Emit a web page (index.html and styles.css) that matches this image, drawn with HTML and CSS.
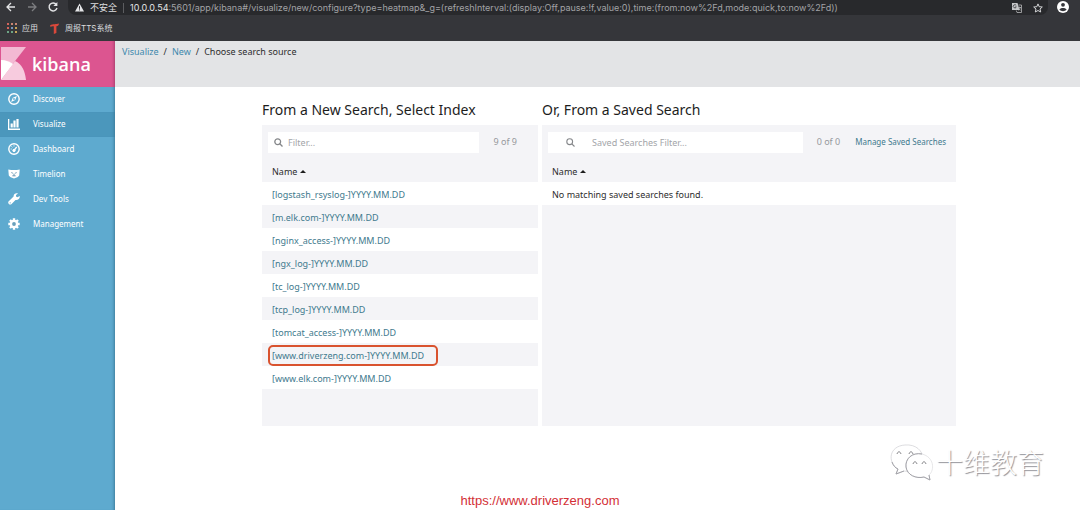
FILE: index.html
```html
<!DOCTYPE html>
<html lang="en">
<head>
<meta charset="utf-8">
<title>Kibana</title>
<link rel="stylesheet" href="styles.css">
</head>
<body>
<header class="browser">
  <div class="toolbar">
    <button class="tool" aria-label="Back"><svg width="12" height="12" viewBox="0 0 12 12" fill="none" stroke="#e4e5e7" stroke-width="1.3"><path d="M10 6H2M6 2L2 6l4 4"/></svg></button>
    <button class="tool" aria-label="Forward"><svg width="12" height="12" viewBox="0 0 12 12" fill="none" stroke="#7c7d80" stroke-width="1.3"><path d="M2 6h8M6 2l4 4-4 4"/></svg></button>
    <button class="tool" aria-label="Reload"><svg width="12" height="12" viewBox="0 0 12 12" fill="none" stroke="#e4e5e7" stroke-width="1.4"><path d="M9.4 3.6A4 4 0 1 0 10 7"/><path d="M10.4 1v4H6.4z" fill="#e4e5e7" stroke="none"/></svg></button>
    <div class="address">
      <svg width="9" height="9" viewBox="0 0 9 9"><path d="M4.5.5L9 8.5H0z" fill="#e4e5e7"/><path d="M4.5 3.2v2.6M4.5 6.4v1" stroke="#28292c"/></svg>
      <span class="unsafe">不安全</span>
      <span class="url"><b>10.0.0.54</b>:5601/app/kibana#/visualize/new/configure?type=heatmap&amp;_g=(refreshInterval:(display:Off,pause:!f,value:0),time:(from:now%2Fd,mode:quick,to:now%2Fd))</span>
      <button class="tool" aria-label="Translate"><svg width="10" height="10" viewBox="0 0 10 10"><path d="M0 0h5.5l2 7H0z" fill="#c5c6c8"/><path d="M4.2 2.4A1.6 1.6 0 1 0 4.3 4H3" fill="none" stroke="#35363a" stroke-width=".8"/><path d="M6.5 2h3v7.5H5l-.7-2M6 4.5h3M7.5 3.7v.8M8.4 4.6L6.7 7.5M6.8 5.4l1.7 2" fill="none" stroke="#b5b6b8" stroke-width=".8"/></svg></button>
      <button class="tool" aria-label="Bookmark"><svg width="10" height="10" viewBox="0 0 10 10" fill="none" stroke="#d4d5d7"><path d="M5 .9l1.2 2.8 3.1.3L7 6l.7 3L5 7.5 2.3 9 3 6 .7 4l3.1-.3z"/></svg></button>
    </div>
    <button class="tool" aria-label="Profile"><svg width="12" height="12" viewBox="0 0 12 12"><circle cx="6" cy="6" r="6" fill="#fff"/><circle cx="6" cy="3.8" r="1.9" fill="#35363a"/><path d="M2.4 8.6C3 6.4 9 6.4 9.6 8.6 8 10.8 4 10.8 2.4 8.6z" fill="#35363a"/></svg></button>
  </div>
  <nav class="bookmarks">
    <a href="#"><svg width="10" height="10" viewBox="0 0 10 10"><path d="M0 0h2v2H0zM0 4h2v2H0z" fill="#d2655c"/><path d="M4 0h2v2H4zM8 0h2v2H8z" fill="#c98672"/><path d="M4 4h2v2H4z" fill="#7595bd"/><path d="M8 4h2v2H8zM8 8h2v2H8z" fill="#c6a457"/><path d="M0 8h2v2H0zM4 8h2v2H4z" fill="#6da585"/></svg>应用</a>
    <a href="#"><svg width="10" height="11" viewBox="0 0 10 11"><path d="M0 2.5C3 .3 6 1.8 9 .5 8.8 2.5 8 3 6.4 3.2V10L3.8 11V3.3C2.3 2.9 1.2 3.4.6 4z" fill="#d9483b"/></svg>周报TTS系统</a>
  </nav>
</header>
<div class="app">
  <aside class="sidebar">
    <a class="logo" href="#">
      <svg width="26" height="34" viewBox="0 0 26 34"><path d="M1 0h25L1 32z" fill="#f3b9d3"/><path d="M15 14c7 3 10 10 11 19H1z" fill="#f7cbde"/><path d="M1 13c5 0 9 2 12 4L1 33z" fill="#fff"/></svg>
      <span>kibana</span>
    </a>
    <nav class="menu">
      <a href="#"><svg width="12" height="12" viewBox="0 0 12 12"><circle cx="6" cy="6" r="5.2" fill="none" stroke="#fff" stroke-width="1.4"/><path d="M8.9 3L7.2 7.1 3.1 9l1.7-4.2z" fill="#fff"/><circle cx="6" cy="6" r=".9" fill="#5eaacf"/></svg>Discover</a>
      <a class="active" href="#"><svg width="12" height="12" viewBox="0 0 12 12" fill="#fff"><path d="M0 1h1.3v9.6H12V12H0zM2.6 5.5h2.2v4H2.6zM5.4 2.5h2.2v7H5.4zM8.4 1h2.2v8.5H8.4z"/></svg>Visualize</a>
      <a href="#"><svg width="12" height="12" viewBox="0 0 12 12" fill="none" stroke="#fff"><circle cx="6" cy="6" r="5.2" stroke-width="1.4"/><path d="M6 7.5L8.7 3.8" stroke-width="1.4"/><circle cx="6" cy="7.5" r="1.2" fill="#fff"/><path d="M2.7 6h1M3.6 3.5l.7.8M6 2.4v1"/></svg>Dashboard</a>
      <a href="#"><svg width="12" height="12" viewBox="0 0 12 12"><path d="M.3 1.5Q6 2.7 11.7 1.5L11.2 7.5Q10 9.6 8 9.8L6 10.5 4 9.8Q2 9.6.8 7.5z" fill="#fff"/><path d="M3.4 4.6l1.4.6M8.6 4.6l-1.4.6M6 5.6v1.8M4.4 7.8h3.2" stroke="#5387a6" stroke-width=".9"/></svg>Timelion</a>
      <a href="#"><svg width="12" height="12" viewBox="0 0 12 12"><path d="M11.7 3L9.5 4.3 8 3.5V2L10 .5C8-.4 5.4.8 5.6 3.6L.5 8.5C-.6 10 1.7 12.5 3.3 11.2L7.5 6.9C10 7.4 12.2 5.4 11.7 3z" fill="#fff"/><circle cx="2.2" cy="9.8" r=".6" fill="#5eaacf"/></svg>Dev Tools</a>
      <a href="#"><svg width="12" height="12" viewBox="0 0 12 12"><g stroke="#fff" stroke-width="2.4"><path d="M6 .3v11.4M.3 6h11.4M2 2l8 8M10 2l-8 8"/></g><circle cx="6" cy="6" r="4.3" fill="#fff"/><circle cx="6" cy="6" r="1.9" fill="#69a0bb"/></svg>Management</a>
    </nav>
  </aside>
  <main class="content">
    <nav class="crumbs"><a href="#">Visualize</a><i>/</i><a href="#">New</a><i>/</i><span>Choose search source</span></nav>
    <div class="sources">
      <section class="source index">
        <h1>From a New Search, Select Index</h1>
        <div class="panel">
          <div class="filterbar">
            <label class="filter"><svg width="9" height="9" viewBox="0 0 9 9" fill="none" stroke="#85878a" stroke-width="1.3"><circle cx="3.7" cy="3.7" r="2.9"/><path d="M5.8 5.8L8.5 8.5"/></svg><input type="text" placeholder="Filter..." aria-label="Filter"></label>
            <span class="count">9 of 9</span>
          </div>
          <table>
            <thead><tr><th>Name <span class="sort"></span></th></tr></thead>
            <tbody>
              <tr><td><a href="#">[logstash_rsyslog-]YYYY.MM.DD</a></td></tr>
              <tr><td><a href="#">[m.elk.com-]YYYY.MM.DD</a></td></tr>
              <tr><td><a href="#">[nginx_access-]YYYY.MM.DD</a></td></tr>
              <tr><td><a href="#">[ngx_log-]YYYY.MM.DD</a></td></tr>
              <tr><td><a href="#">[tc_log-]YYYY.MM.DD</a></td></tr>
              <tr><td><a href="#">[tcp_log-]YYYY.MM.DD</a></td></tr>
              <tr><td><a href="#">[tomcat_access-]YYYY.MM.DD</a></td></tr>
              <tr><td><a class="marked" href="#">[www.driverzeng.com-]YYYY.MM.DD</a></td></tr>
              <tr><td><a href="#">[www.elk.com-]YYYY.MM.DD</a></td></tr>
            </tbody>
          </table>
        </div>
      </section>
      <section class="source saved">
        <h1>Or, From a Saved Search</h1>
        <div class="panel">
          <div class="filterbar">
            <label class="filter"><svg width="9" height="9" viewBox="0 0 9 9" fill="none" stroke="#85878a" stroke-width="1.1"><circle cx="3.7" cy="3.7" r="2.9"/><path d="M5.8 5.8L8.5 8.5"/></svg><input type="text" placeholder="Saved Searches Filter..." aria-label="Saved Searches Filter"></label>
            <span class="count">0 of 0</span>
            <a class="manage" href="#">Manage Saved Searches</a>
          </div>
          <table>
            <thead><tr><th>Name <span class="sort"></span></th></tr></thead>
            <tbody><tr><td>No matching saved searches found.</td></tr></tbody>
          </table>
        </div>
      </section>
    </div>
  </main>
</div>
<div class="watermark">
  <svg width="46" height="40" viewBox="0 0 46 40" fill="#fff" stroke="#b4b4b8"><path d="M9 27C-2 20 0 4 16 3c11-1 18 6 18 14 0 9-9 14-19 12l-8 3z" stroke="#cfcfd3" stroke-width=".7"/><path d="M33 12c-10-2-17 5-16 13 1 8 10 12 18 10l6 3-1-5c6-5 5-18-7-21z" stroke="#dcdce0" stroke-width=".7"/><path d="M3 20c1 3 3 6 6 7l-2 5 8-3M33 12c-10-2-17 5-16 13 1 8 10 12 18 10l6 3-1-5" fill="none" stroke="#a2a2a8"/><path d="M8 12c1-3 3-3 4 0M20 12c1-3 3-3 4 0M24 22c1-3 3-3 4 0M33 22c1-3 3-3 4 0" fill="none" stroke="#858589"/></svg>
  <span>十维教育</span>
</div>
<a class="site" href="#">https://www.driverzeng.com</a>
</body>
</html>
```
FILE: styles.css
```css
* { box-sizing: border-box; }
body {
  margin: 0;
  min-height: 100vh;
  display: flex;
  flex-direction: column;
  position: relative;
  background: #fff;
  color: #2d2d2d;
  font: 9px/14px "Noto Sans", "Open Sans", sans-serif;
}
a { color: #417a8e; text-decoration: none; }
button { border: 0; padding: 0; background: none; }
svg { flex: none; display: block; }

.browser {
  height: 41px;
  background: #35363a;
  color: #dcdddf;
  font-family: Inter, "Noto Sans CJK SC", sans-serif;
}
.toolbar { display: flex; align-items: flex-start; padding: 0 7px 0 0; }
.tool { flex: none; width: 21px; height: 14px; display: grid; place-items: center; }
.address {
  flex: 1;
  min-width: 0;
  display: flex;
  align-items: center;
  height: 15px;
  margin: 0 4px 0 5px;
  padding-left: 7px;
  background: #28292c;
  border-radius: 0 0 8px 8px;
}
.unsafe { margin-left: 6px; padding-right: 6px; border-right: 1px solid #5c5d60; line-height: 10px; }
.url { flex: 1; margin-left: 6px; white-space: nowrap; overflow: hidden; color: #a2a3a6; }
.url b { font-weight: 400; color: #e4e5e7; }
.bookmarks { display: flex; gap: 12px; padding: 6px 7px; font-size: 8px; }
.bookmarks a { display: flex; align-items: center; gap: 5px; color: #dcdddf; }

.app { flex: 1; display: flex; }
.sidebar { flex: none; width: 115px; background: #5eaacf; box-shadow: inset -3px 0 3px -2px #3f7c9b; }
.logo {
  display: flex;
  align-items: center;
  gap: 6px;
  height: 46px;
  background: #dc5590;
  box-shadow: inset -3px 0 3px -2px #a83e6c;
  color: #fff;
  font: 600 18px/28px "Open Sans", sans-serif;
}
.menu a {
  display: flex;
  align-items: center;
  gap: 13px;
  height: 25px;
  padding: 0 8px 2px;
  color: #fff;
  font-size: 8px;
}
.menu .active { background: #4b97bc; box-shadow: inset -3px 0 3px -2px #3f7c9b; }

.content { flex: 1; min-width: 0; }
.crumbs { display: flex; gap: 5px; height: 46px; padding: 4px 7px; background: #e3e4e6; }
.crumbs a { color: #3f89ad; }
.crumbs i { font-style: normal; }
.sources { display: flex; gap: 4px; padding: 13px 124px 0 147px; }
.source { display: flex; flex-direction: column; min-width: 0; }
.index { flex: 2; }
.saved { flex: 3; }
h1 { margin: 0 0 5px; font-size: 14px; line-height: 20px; font-weight: 400; color: #1d1d1d; white-space: nowrap; }
.panel { flex: 1; min-height: 301px; background: #f4f4f7; }
.filterbar { display: flex; align-items: center; padding: 7px 10px 6px 6px; line-height: 18px; }
.filter { flex: 1; min-width: 0; display: flex; align-items: center; gap: 5px; height: 21px; padding-left: 6px; background: #fff; }
.saved .filter { gap: 17px; padding-left: 18px; }
.filter input { flex: 1; min-width: 0; border: 0; padding: 0; background: none; font: inherit; color: #2d2d2d; }
.filter input::placeholder { color: #a3a5a9; opacity: 1; }
.count { margin: 0 11px 0 14px; padding-bottom: 2px; color: #96989c; }
.saved .count { margin-right: 15px; }
.manage { padding-bottom: 2px; font-size: 8px; }
table { width: 100%; border-collapse: collapse; }
th, td { height: 23px; padding: 2px 10px 0; text-align: left; font-weight: 400; }
tbody tr:nth-child(odd) { background: #fff; }
.sort { display: inline-block; border: 3px solid transparent; border-top: 0; border-bottom-color: #1d1d1d; vertical-align: 2px; }
.marked { padding-right: 10px; outline: 2px solid #d9532f; outline-offset: 2px; border-radius: 1px; }

.watermark {
  position: absolute;
  right: 36px;
  bottom: 28px;
  display: flex;
  align-items: center;
  gap: 1px;
  color: #fff;
  font: 27px/40px "Noto Sans CJK SC", sans-serif;
  font-weight: 300;
  text-shadow: 1px 1px 1px #909096;
}
.site {
  position: absolute;
  left: 0;
  right: 0;
  bottom: 1px;
  text-align: center;
  color: #d32f36;
  font: 13px/16px "Liberation Sans", sans-serif;
}
```
